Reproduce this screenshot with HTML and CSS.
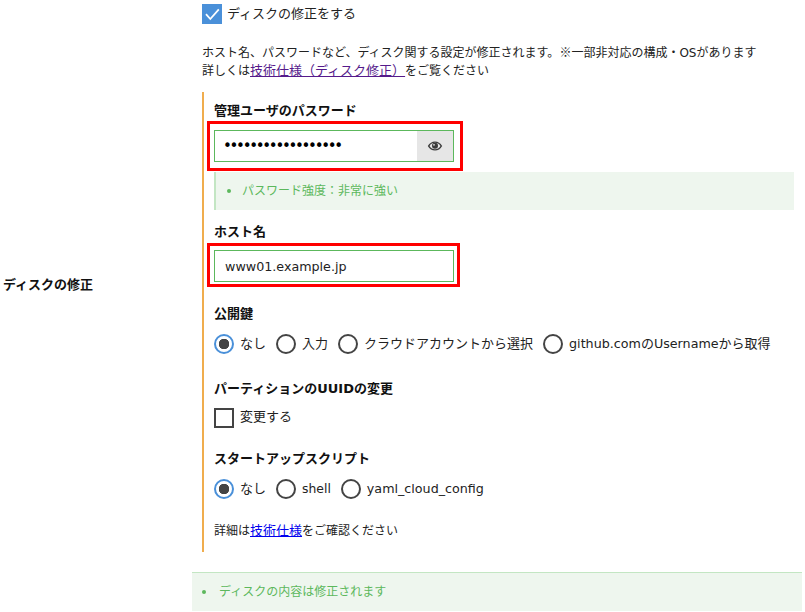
FILE: index.html
```html
<!DOCTYPE html>
<html lang="ja">
<head>
<meta charset="utf-8">
<title>ディスクの修正</title>
<link rel="stylesheet" href="styles.css">
</head>
<body>
<div class="row">
  <div class="row-label">ディスクの修正</div>
  <div class="row-body">
    <div class="inner">
      <label class="check-line top-check">
        <span class="check checked">
          <svg width="20" height="20" viewBox="0 0 20 20"><path d="M4 10.200 8.300 15 16.800 5.300" fill="none" stroke="#fff" stroke-width="1.800"/></svg>
        </span>
        <span class="title-text">ディスクの修正をする</span>
      </label>
      <p class="desc">ホスト名、パスワードなど、ディスク関する設定が修正されます。<span class="cjk">※</span>一部非対応の構成・OSがあります<br>詳しくは<a class="visited" href="#">技術仕様（ディスク修正）</a>をご覧ください</p>
      <div class="section">
        <div class="field-label first">管理ユーザのパスワード</div>
        <div class="mark">
          <div class="input-group">
            <input class="text-input pw" type="password" value="abcdefghijklmnopqr">
            <span class="eye">
              <svg width="16" height="12" viewBox="0 0 16 12"><path d="M.8 6C2.600 2.900 5 1.400 8 1.400s5.400 1.500 7.200 4.600C13.400 9.100 11 10.600 8 10.600S2.600 9.100.8 6z" fill="#3c3c3c"/><path d="M2.500 6C3.900 3.900 5.700 2.800 8 2.800s4.100 1.100 5.500 3.200C12.100 8.100 10.300 9.200 8 9.200S3.900 8.100 2.500 6z" fill="#e6e6e6"/><circle cx="8" cy="5.800" r="3" fill="#3c3c3c"/><circle cx="7" cy="4.800" r=".9" fill="#e6e6e6"/></svg>
            </span>
          </div>
        </div>
        <ul class="msg inner-msg"><li>パスワード強度：非常に強い</li></ul>
        <div class="field-label host-label">ホスト名</div>
        <div class="mark host-mark">
          <input class="text-input host" type="text" value="www01.example.jp">
        </div>
        <div class="field-label key-label">公開鍵</div>
        <div class="options">
          <label class="opt"><input class="radio" type="radio" name="key" checked>なし</label>
          <label class="opt"><input class="radio" type="radio" name="key">入力</label>
          <label class="opt"><input class="radio" type="radio" name="key">クラウドアカウントから選択</label>
          <label class="opt"><input class="radio" type="radio" name="key"><span><span class="latin">github.com</span>の<span class="latin">Username</span>から取得</span></label>
        </div>
        <div class="field-label uuid-label">パーティションのUUIDの変更</div>
        <label class="check-line uuid-check"><span class="check"></span>変更する</label>
        <div class="field-label script-label">スタートアップスクリプト</div>
        <div class="options">
          <label class="opt"><input class="radio" type="radio" name="script" checked>なし</label>
          <label class="opt"><input class="radio" type="radio" name="script"><span class="shell">shell</span></label>
          <label class="opt"><input class="radio" type="radio" name="script"><span class="latin">yaml_cloud_config</span></label>
        </div>
        <p class="detail">詳細は<a class="fresh" href="#">技術仕様</a>をご確認ください</p>
      </div>
    </div>
    <ul class="msg outer-msg"><li>ディスクの内容は修正されます</li></ul>
  </div>
</div>
</body>
</html>
```
FILE: styles.css
```css
* { box-sizing: border-box; }
html, body { margin: 0; padding: 0; background: #fff; overflow: hidden; }
body {
  width: 805px;
  height: 612px;
  color: #222;
  font-family: "DejaVu Sans", "Noto Sans CJK JP", sans-serif;
  font-size: 13px;
}
.cjk { font-family: "Noto Sans CJK JP", sans-serif; }
.latin { font-size: 12.700px; }
.shell { font-size: 12.400px; }
.row { display: grid; grid-template-columns: 192px 610px; align-items: center; }
.row-label { padding: 0 0 45px 3px; font-weight: 700; color: #111; }
.row-body { padding-top: 4px; }
.inner { padding-left: 10px; padding-right: 8px; }
.check-line { display: flex; align-items: center; gap: 6px; line-height: 18px; }
.top-check { gap: 5px; height: 20px; }
.check { display: block; width: 20px; height: 20px; flex: none; background: #fff; border: 2px solid #444; }
.check.checked { border: 0; background: #4a90d9; }
.check svg { display: block; }
.title-text { padding-bottom: 1px; }
.desc { margin: 19px 0 0; font-size: 12px; line-height: 18px; color: #222; }
.desc a, .detail a { font-size: 13px; }
.visited { color: #551a8b; }
.fresh { color: #0000ee; }
.section { margin-top: 12px; border-left: 2px solid #f0ad4e; padding: 8px 0 12px 10px; }
.field-label { font-weight: 700; height: 20px; line-height: 22px; color: #111; }
.mark { position: relative; margin-top: 10px; width: 240px; }
.mark::after {
  content: "";
  position: absolute;
  left: -7px;
  top: -9px;
  right: -9px;
  bottom: -9px;
  border: 3px solid #f00;
  pointer-events: none;
}
.host-mark { margin-top: 9px; }
.host-mark::after { right: -6px; top: -7px; bottom: -5px; }
.input-group { display: flex; height: 32px; border: 1px solid #5cb85c; }
.text-input { font: inherit; color: #222; outline: 0; min-width: 0; }
.pw { flex: 1; border: 0; padding: 0 8px; height: 30px; color: #000; font-size: 15px; letter-spacing: -2.300px; }
.eye { width: 36px; display: flex; align-items: center; justify-content: center; background: #e6e6e6; }
.host { display: block; width: 240px; height: 32px; border: 1px solid #5cb85c; padding: 0 10px; font-size: 12.700px; }
.msg { list-style: none; margin: 0; color: #5cb85c; background: #eef6ee; font-size: 12px; }
.msg li { display: flex; align-items: center; line-height: 16px; padding-bottom: 1px; }
.msg li::before { content: ""; width: 4px; height: 4px; border-radius: 50%; background: #5cb85c; flex: none; }
.inner-msg { margin-top: 10px; height: 38px; padding: 0 0 0 11px; border-left: 2px solid #c3e6c3; display: flex; align-items: center; }
.inner-msg li::before { margin-right: 11px; }
.outer-msg { margin-top: 20px; height: 39px; padding: 0 0 0 10px; border-top: 1px solid #c3e6c3; display: flex; align-items: center; }
.outer-msg li::before { margin-right: 13px; }
.host-label { margin-top: 11px; }
.key-label { margin-top: 22px; line-height: 20px; }
.uuid-label { margin-top: 25px; line-height: 20px; }
.script-label { margin-top: 21px; line-height: 20px; }
.options { display: flex; gap: 10px; margin-top: 10px; height: 20px; }
.opt { display: flex; align-items: flex-start; gap: 6px; white-space: nowrap; line-height: 19px; }
.radio { appearance: none; -webkit-appearance: none; margin: 0; width: 20px; height: 20px; flex: none; background: #fff; border-radius: 50%; border: 2px solid #444; }
.radio:checked { border: 2px solid #4a90d9; background: radial-gradient(circle, #444 0 5px, #fff 5.500px); }
.uuid-check { margin-top: 9px; height: 20px; align-items: flex-start; }
.detail { margin: 23px 0 0; font-size: 12px; line-height: 18px; }
```
